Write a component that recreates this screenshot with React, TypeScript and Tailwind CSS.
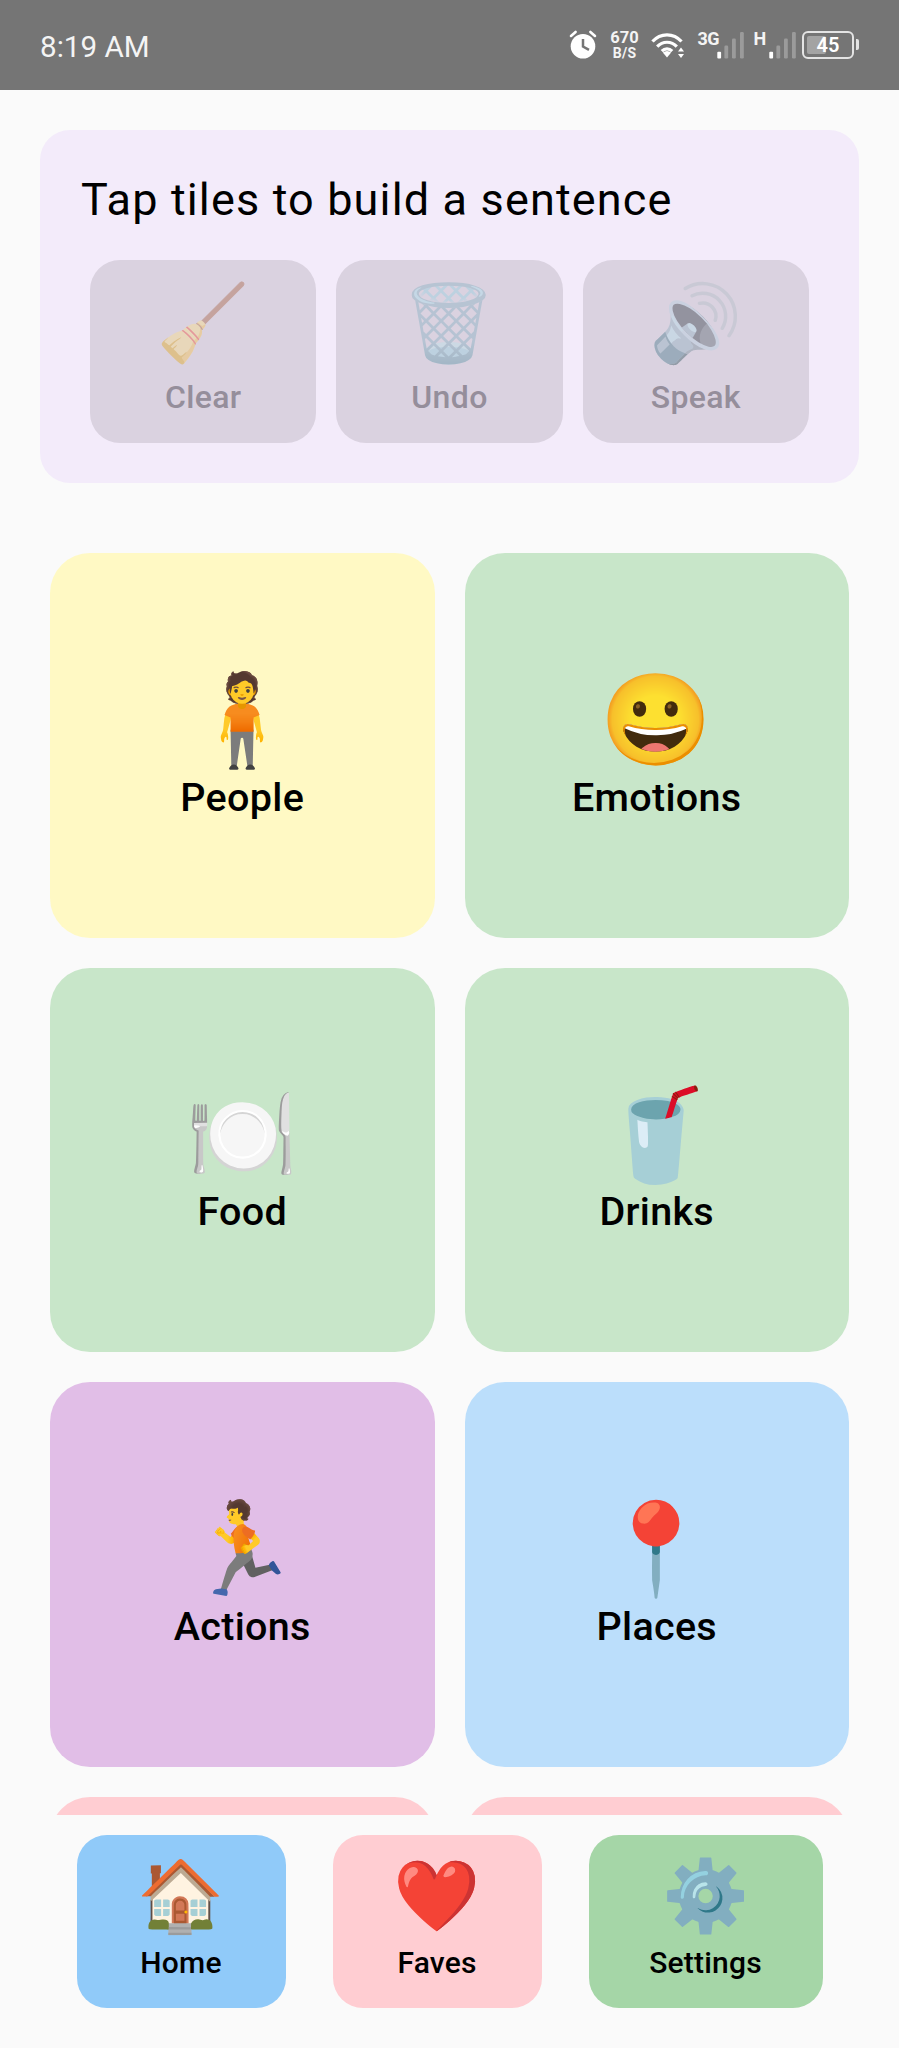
const EMOJI = "font-['Noto_Color_Emoji',sans-serif]";

function AlarmIcon() {
  return (
    <svg className="h-[30px] w-[28px]" viewBox="0 0 28 30" fill="none">
      <circle cx="14" cy="16.2" r="12.3" fill="#fff" />
      <path d="M14 9v7.5l6 3.3" stroke="#757575" strokeWidth="2.5" />
      <path d="M2 5.9l4.6-4M26 5.9l-4.6-4" stroke="#fff" strokeWidth="2.6" strokeLinecap="round" />
    </svg>
  );
}

function WifiIcon() {
  return (
    <svg className="ml-[11px] h-[30px] w-[34px]" viewBox="0 0 34 30" fill="none">
      <g stroke="#fff" strokeWidth="3.2">
        <path d="M1.5 11.5C9.5 2.6 22.5 2.6 30.5 11.5" />
        <path d="M6.2 16.6C11.6 10.8 20.4 10.8 25.8 16.6" />
        <path d="M10.8 21.2C13.8 18.2 18.2 18.2 21.2 21.2" />
      </g>
      <path d="M11.8 22.6Q16 19.6 20.2 22.6L16 27.4Z" fill="#fff" />
      <path d="M30 17.6l3 4h-6zM30 28l3-4h-6z" fill="#fff" />
    </svg>
  );
}

function SignalBars() {
  return (
    <svg className="h-[30px] w-[29px]" viewBox="0 0 29 30">
      <rect x="1.3" y="21.8" width="3.8" height="6.7" rx="1" fill="#fff" />
      <rect x="8.4" y="15.5" width="3.8" height="13" rx="1.3" fill="#9b9b9b" />
      <rect x="16" y="8.5" width="3.8" height="20" rx="1.3" fill="#9b9b9b" />
      <rect x="24" y="2" width="3.8" height="26.5" rx="1.3" fill="#9b9b9b" />
    </svg>
  );
}

function Battery() {
  return (
    <div className="ml-[5.5px] flex items-center">
      <div className="relative mt-px flex h-[28px] w-[52px] items-center justify-center rounded-[6px] border-2 border-[#e4e4e4]">
        <span className="absolute top-[3px] left-[3px] h-[18px] w-[19px] rounded-[2px] bg-[#a3a3a3]" />
        <span className="relative text-[20px] leading-[24px] font-semibold text-white">45</span>
      </div>
      <span className="ml-[1.5px] h-[11px] w-[3px] rounded-r-[2px] bg-[#e4e4e4]" />
    </div>
  );
}

function StatusBar() {
  return (
    <header className="flex h-[89.5px] shrink-0 items-start justify-between bg-[#757575] pr-[40.5px] pl-10 text-[#f4f4f4]">
      <span className="mt-[29.5px] text-[29.6px] leading-[35px]">8:19 AM</span>
      <div className="mt-[30px] flex h-[30px] items-start">
        <AlarmIcon />
        <div className="ml-[13px] flex w-[30px] flex-col items-center font-bold">
          <span className="-mt-[1.5px] text-[16.5px] leading-[17px]">670</span>
          <span className="text-[14px] leading-[14px] tracking-[0.3px]">B/S</span>
        </div>
        <WifiIcon />
        <span className="ml-[13px] w-[18px] text-[18px] leading-[17px] font-bold tracking-[-0.5px]">3G</span>
        <SignalBars />
        <span className="ml-[9px] w-[14px] text-[18px] leading-[17px] font-bold">H</span>
        <SignalBars />
        <Battery />
      </div>
    </header>
  );
}

const actions = [
  { label: "Clear", icon: "🧹" },
  { label: "Undo", icon: "🗑️" },
  { label: "Speak", icon: "🔊" },
];

const tiles = [
  { label: "People", icon: "🧍", bg: "bg-[#fff9c4]" },
  { label: "Emotions", icon: "😀", bg: "bg-[#c8e6c9]" },
  { label: "Food", icon: "🍽️", bg: "bg-[#c8e6c9]" },
  { label: "Drinks", icon: "🥤", bg: "bg-[#c8e6c9]" },
  { label: "Actions", icon: "🏃", bg: "bg-[#e1bee7]" },
  { label: "Places", icon: "📍", bg: "bg-[#bbdefb]" },
  { label: "", icon: "", bg: "bg-[#ffcdd2]" },
  { label: "", icon: "", bg: "bg-[#ffcdd2]" },
];

const nav = [
  { label: "Home", icon: "🏠", cls: "w-[209px] bg-[#90caf9]" },
  { label: "Faves", icon: "❤️", cls: "w-[209px] bg-[#ffcdd2]" },
  { label: "Settings", icon: "⚙️", cls: "w-[234px] bg-[#a5d6a7]" },
];

export default function App() {
  return (
    <div className="flex h-[2048px] w-[899px] flex-col overflow-hidden bg-[#fafafa] font-['Roboto',sans-serif] text-black">
      <StatusBar />
      <section className="mx-10 mt-[40.5px] h-[353px] shrink-0 rounded-[30px] bg-[#f3ebfa] px-10 pt-[38.5px]">
        <h1 className="ml-px text-[45px] leading-[62px] tracking-[1.15px] whitespace-nowrap">
          Tap tiles to build a sentence
        </h1>
        <div className="mt-[29px] flex gap-5 px-[10px]">
          {actions.map((a) => (
            <button key={a.label} className="flex h-[183px] flex-1 flex-col items-center rounded-[30px] bg-[#dad2e0] pt-5">
              <span className={`${EMOJI} h-[86px] text-[75px] leading-[86px] opacity-40`}>{a.icon}</span>
              <span className="mt-[12px] text-[32px] leading-[38px] font-medium tracking-[0.35px] text-[#958e9b]">{a.label}</span>
            </button>
          ))}
        </div>
      </section>
      <main className="mt-[70px] grid h-[1261.5px] shrink-0 auto-rows-[384.5px] grid-cols-2 gap-[30px] overflow-hidden px-[50px]">
        {tiles.map((t, i) => (
          <div key={i} className={`flex flex-col items-center rounded-[40px] pt-[119px] ${t.bg}`}>
            <span className={`${EMOJI} h-[98px] text-[90px] leading-[98px]`}>{t.icon}</span>
            <span className="mt-[3.5px] text-[39.5px] leading-[48px] font-medium tracking-[0.3px]">{t.label}</span>
          </div>
        ))}
      </main>
      <nav className="mt-5 flex justify-between px-[76.5px]">
        {nav.map((n) => (
          <button key={n.label} className={`flex h-[173px] flex-col items-center rounded-[30px] pt-[21px] ${n.cls}`}>
            <span className={`${EMOJI} h-[80px] text-[70px] leading-[80px]`}>{n.icon}</span>
            <span className="mt-[9px] text-[30px] leading-[36px] font-medium tracking-[0.2px]">{n.label}</span>
          </button>
        ))}
      </nav>
    </div>
  );
}
